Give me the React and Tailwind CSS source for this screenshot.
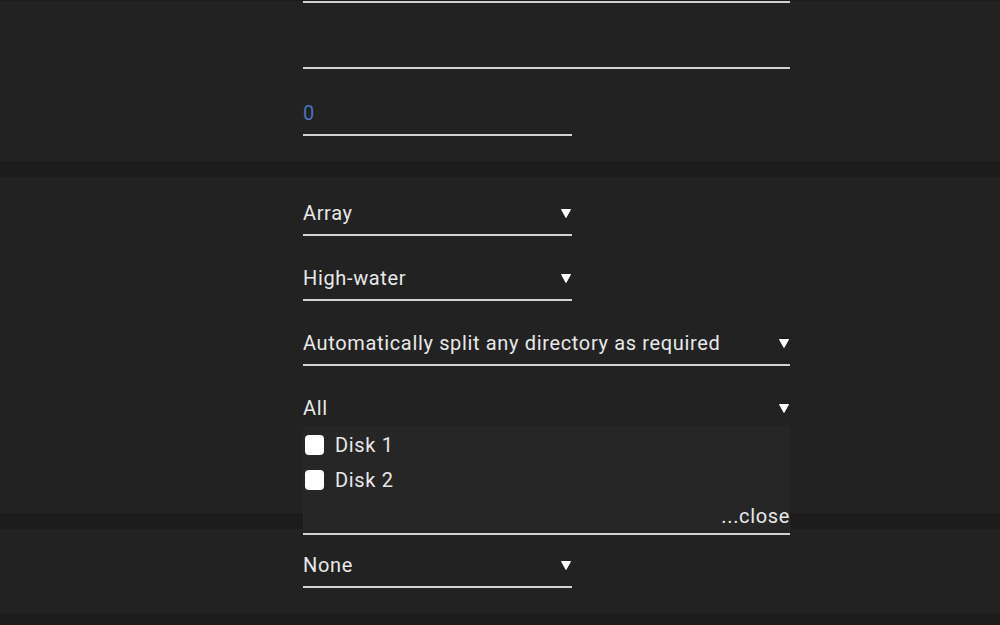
import React from 'react';

const font = { fontFamily: 'Roboto, "Open Sans", "DejaVu Sans", sans-serif' };

function Caret() {
  return (
    <svg width="10" height="9" viewBox="0 0 10 9" className="shrink-0 mr-[1px]">
      <path d="M0.5 0.5 H9.5 L5 8.5 Z" fill="#ffffff" stroke="#ffffff" strokeWidth="1" strokeLinejoin="round" />
    </svg>
  );
}

function Field({ value, wide, select, blue, className = '' }) {
  return (
    <div
      className={`${wide ? 'w-[487px]' : 'w-[269px]'} h-[46px] border-b-2 border-[#d2d2d2] flex items-end pb-[9px] ${className}`}
    >
      <div className="h-[24px] w-full flex items-center justify-between">
        <span className={`leading-[24px] tracking-[0.65px] ${blue ? 'text-[#4d72b8]' : 'text-[#e8e8e8]'}`}>{value}</span>
        {select && <Caret />}
      </div>
    </div>
  );
}

function Checkbox({ label }) {
  return (
    <label className="flex items-center h-[35px] pl-[2px]">
      <span className="w-[19px] h-[20px] rounded-[4px] bg-white" />
      <span className="ml-[11px] leading-[24px] tracking-[0.65px] text-[#e8e8e8]">{label}</span>
    </label>
  );
}

export default function App() {
  return (
    <div className="h-[625px] overflow-hidden bg-[#1c1c1c] text-[20px]" style={font}>
      {/* section 1 (scrolled) */}
      <div className="bg-[#222222] pb-[25px]">
        <div className="ml-[303px]">
          <div className="w-[487px] h-[2px] mt-[1px] bg-[#d2d2d2]" />
          <Field wide className="mt-[20px]" value="" />
          <Field blue className="mt-[21px]" value="0" />
        </div>
      </div>

      {/* section 2 */}
      <div className="bg-[#222222] mt-[16px] pt-[13px] pb-[82px] relative z-10">
        <div className="ml-[303px]">
          <Field select value="Array" />
          <Field select className="mt-[19px]" value="High-water" />
          <Field select wide className="mt-[19px]" value="Automatically split any directory as required" />
          <div className="relative mt-[19px]">
            <Field select wide value="All" />
            <div className="absolute left-0 top-[41px] w-[487px] h-[109px] bg-[#262626] border-b-2 border-[#d2d2d2] flex flex-col pt-[1px]">
              <Checkbox label="Disk 1" />
              <Checkbox label="Disk 2" />
              <div className="mt-auto text-right leading-[24px] tracking-[0.65px] pb-[5px] text-[#e8e8e8]">...close</div>
            </div>
          </div>
        </div>
      </div>

      {/* section 3 */}
      <div className="bg-[#222222] mt-[16px] pt-[13px] pb-[25px]">
        <div className="ml-[303px]">
          <Field select value="None" />
        </div>
      </div>
    </div>
  );
}
